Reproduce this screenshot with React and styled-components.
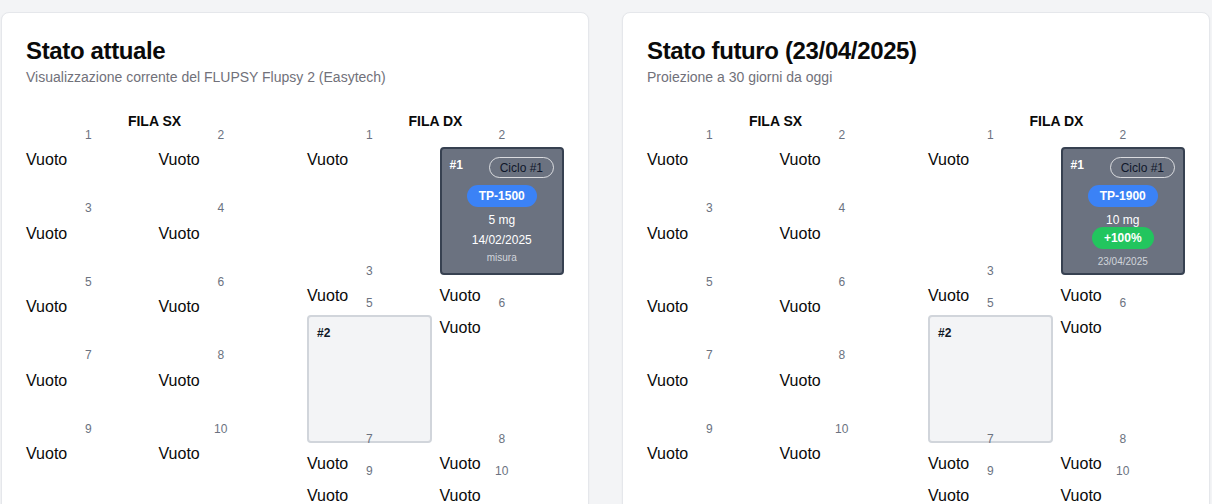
import React from "react";
import styled, { createGlobalStyle } from "styled-components";

const GlobalStyle = createGlobalStyle`
  * { box-sizing: border-box; }
  html, body {
    margin: 0;
    padding: 0;
    background: #f3f4f6;
  }
  body {
    font-family: "Liberation Sans", Arial, sans-serif;
    color: #0a0a0a;
  }
`;

const Page = styled.div`
  display: grid;
  grid-template-columns: 588px 588px;
  column-gap: 33px;
  padding: 12px 2px 0 1px;
`;

const Card = styled.section`
  background: #fff;
  border: 1px solid #e5e7eb;
  border-radius: 8px;
  box-shadow: 0 1px 2px rgba(0, 0, 0, 0.05);
`;

const CardHeader = styled.header`
  display: flex;
  flex-direction: column;
  gap: 4px;
  padding: 24px;
`;

const Title = styled.h2`
  margin: 0;
  padding-top: 2px;
  font-size: 24px;
  line-height: 24px;
  font-weight: 600;
  letter-spacing: -0.015em;
`;

const Description = styled.p`
  margin: 0;
  font-size: 14px;
  line-height: 20px;
  color: #71717a;
`;

const CardBody = styled.div`
  display: grid;
  grid-template-columns: 1fr 1fr;
  column-gap: 24px;
  padding: 0 24px 24px;
`;

const FilaTitle = styled.h3`
  margin: 0 0 -4px;
  text-align: center;
  font-size: 14px;
  line-height: 20px;
  font-weight: 700;
`;

const SlotGrid = styled.div`
  display: grid;
  grid-template-columns: 1fr 1fr;
  column-gap: 8px;
`;

const Slot = styled.div`
  height: ${(p) => p.$h}px;
`;

const SlotNumber = styled.div`
  margin-bottom: 4px;
  padding-top: 0.5px;
  text-align: center;
  font-size: 12px;
  line-height: 15.5px;
  color: #6b7280;
`;

const Empty = styled.div`
  padding-top: 1px;
  font-size: 16px;
  line-height: 23px;
`;

const Basket = styled.div`
  position: ${(p) => (p.$active ? "relative" : "static")};
  height: 128px;
  padding: 8px;
  display: flex;
  flex-direction: column;
  align-items: center;
  border-radius: 4px;
  border: 2px solid ${(p) => (p.$active ? "#374151" : "#d1d5db")};
  background: ${(p) => (p.$active ? "#6b7280" : "#f3f4f6")};
  color: ${(p) => (p.$active ? "#fff" : "#111827")};
`;

const BasketTop = styled.div`
  align-self: stretch;
  display: flex;
  justify-content: space-between;
  align-items: flex-start;
`;

const BasketId = styled.span`
  font-size: 12px;
  line-height: 16px;
  font-weight: 700;
`;

const Pill = styled.span`
  display: inline-block;
  margin-top: ${(p) => p.$mt || 0}px;
  padding: ${(p) => (p.$outline ? "1.5px 10px" : "3px 12px")};
  border-radius: 9999px;
  font-size: 12px;
  line-height: 16px;
  font-weight: ${(p) => (p.$outline ? 400 : 700)};
  background: ${(p) => p.$bg || "transparent"};
  color: ${(p) => (p.$outline ? "#0f172a" : "#fff")};
  border: ${(p) => (p.$outline ? "1px solid rgba(255,255,255,0.75)" : "none")};
`;

const Info = styled.div`
  margin-top: ${(p) => p.$mt || 0}px;
  font-size: ${(p) => (p.$small ? 10 : 12)}px;
  line-height: ${(p) => (p.$small ? 14 : 16)}px;
  color: ${(p) => (p.$small ? "#d1d5db" : "#fff")};
`;

const emptyRow = (a, b, h) => [
  { n: a, h },
  { n: b, h },
];

const sxSlots = [
  ...emptyRow(1, 2, 73.5),
  ...emptyRow(3, 4, 73.5),
  ...emptyRow(5, 6, 73.5),
  ...emptyRow(7, 8, 73.5),
  ...emptyRow(9, 10, 73.5),
];

const dxSlots = (basket) => [
  { n: 1, h: 136 },
  { n: 2, h: 136, basket },
  ...emptyRow(3, 4, 32),
  { n: 5, h: 136, basket: { id: 2 } },
  { n: 6, h: 136 },
  ...emptyRow(7, 8, 32),
  ...emptyRow(9, 10, 32),
];

function ActiveBasket({ b }) {
  return (
    <Basket $active>
      <BasketTop>
        <BasketId>#{b.id}</BasketId>
        <Pill $outline>Ciclo #1</Pill>
      </BasketTop>
      <Pill $bg="#3b82f6" $mt={7}>{b.size}</Pill>
      <Info $mt={5}>{b.weight}</Info>
      {b.growth ? (
        <>
          <Pill $bg="#22c55e" $mt={-1}>{b.growth}</Pill>
          <Info $small $mt={6}>{b.date}</Info>
        </>
      ) : (
        <>
          <Info $mt={4}>{b.date}</Info>
          <Info $small $mt={3}>{b.note}</Info>
        </>
      )}
    </Basket>
  );
}

function SlotView({ s }) {
  let content = <Empty>Vuoto</Empty>;
  if (s.basket && s.basket.size) content = <ActiveBasket b={s.basket} />;
  else if (s.basket)
    content = (
      <Basket>
        <BasketTop>
          <BasketId>#{s.basket.id}</BasketId>
        </BasketTop>
      </Basket>
    );
  return (
    <Slot $h={s.h}>
      <SlotNumber>{s.n}</SlotNumber>
      {content}
    </Slot>
  );
}

function Fila({ title, slots }) {
  return (
    <div>
      <FilaTitle>{title}</FilaTitle>
      <SlotGrid>
        {slots.map((s) => (
          <SlotView key={s.n} s={s} />
        ))}
      </SlotGrid>
    </div>
  );
}

function StatoCard({ title, description, basket }) {
  return (
    <Card>
      <CardHeader>
        <Title>{title}</Title>
        <Description>{description}</Description>
      </CardHeader>
      <CardBody>
        <Fila title="FILA SX" slots={sxSlots} />
        <Fila title="FILA DX" slots={dxSlots(basket)} />
      </CardBody>
    </Card>
  );
}

export default function App() {
  return (
    <>
      <GlobalStyle />
      <Page>
        <StatoCard
          title="Stato attuale"
          description="Visualizzazione corrente del FLUPSY Flupsy 2 (Easytech)"
          basket={{ id: 1, size: "TP-1500", weight: "5 mg", date: "14/02/2025", note: "misura" }}
        />
        <StatoCard
          title="Stato futuro (23/04/2025)"
          description="Proiezione a 30 giorni da oggi"
          basket={{ id: 1, size: "TP-1900", weight: "10 mg", growth: "+100%", date: "23/04/2025" }}
        />
      </Page>
    </>
  );
}
